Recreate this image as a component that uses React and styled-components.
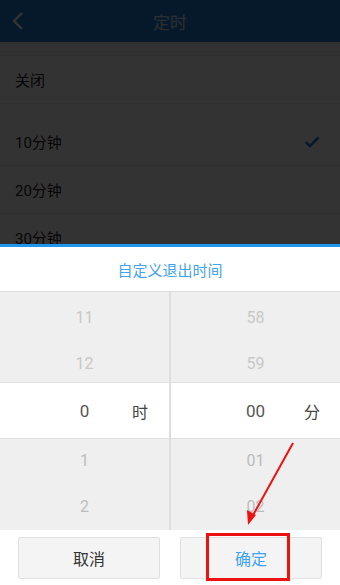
import React from "react";
import styled, { createGlobalStyle } from "styled-components";

const GlobalStyle = createGlobalStyle`
  html, body {
    margin: 0;
    padding: 0;
  }
  body {
    font-family: "Roboto", "Noto Sans CJK SC", sans-serif;
    background: #ffffff;
  }
`;

const Screen = styled.div`
  position: relative;
  width: 340px;
  height: 585px;
  overflow: hidden;
  background: #ffffff;
`;

const Header = styled.div`
  height: 42px;
  background: #197dd7;
  display: flex;
  align-items: center;
  justify-content: center;
  position: relative;
  color: #d8e6f2;
  font-size: 17px;
`;

const BackButton = styled.div`
  position: absolute;
  left: 10px;
  top: 11px;
  width: 16px;
  height: 20px;
  display: flex;
`;

const Gap = styled.div`
  height: 13px;
  background: #f2f2f2;
  border-bottom: 1px solid #e4e4e4;
`;

const List = styled.div`
  display: flex;
  flex-direction: column;
`;

const Row = styled.div`
  height: 47px;
  display: flex;
  align-items: center;
  justify-content: space-between;
  padding: 0 20px 0 15px;
  font-size: 15px;
  color: #222;
  border-bottom: 1px solid #ececec;
  margin-bottom: ${(p) => (p.$spaced ? "14px" : "0")};
`;

const Dim = styled.div`
  position: absolute;
  inset: 0;
  background: rgba(0, 0, 0, 0.8);
`;

const Sheet = styled.div`
  position: absolute;
  left: 0;
  right: 0;
  bottom: 0;
  height: 338px;
  background: #ffffff;
  border-top: 3px solid #2196ef;
  display: flex;
  flex-direction: column;
`;

const SheetTitle = styled.div`
  height: 44px;
  display: flex;
  align-items: center;
  justify-content: center;
  color: #3fa3ef;
  font-size: 15px;
  border-bottom: 1px solid #dedede;
`;

const Picker = styled.div`
  display: grid;
  grid-template-columns: 169px 2px 1fr;
  height: 238px;
`;

const Divider = styled.div`
  background: #dedede;
`;

const Column = styled.div`
  display: flex;
  flex-direction: column;
`;

const Band = styled.div`
  background: #efefef;
  height: ${(p) => p.$h}px;
  display: flex;
  flex-direction: column;
  border-top: ${(p) => (p.$top ? "1px solid #e0e0e0" : "none")};
  border-bottom: ${(p) => (p.$bottom ? "1px solid #e0e0e0" : "none")};
  box-sizing: border-box;
  overflow: hidden;
`;

const Cells = styled.div`
  display: flex;
  flex-direction: column;
  margin-top: ${(p) => p.$shift}px;
`;

const Cell = styled.div`
  height: 46px;
  flex-shrink: 0;
  display: flex;
  align-items: center;
  justify-content: center;
  font-size: 16px;
  color: ${(p) => p.$color || "#c8c8c8"};
`;

const Selected = styled.div`
  height: 55px;
  display: grid;
  grid-template-columns: 1fr ${(p) => p.$unitW}px;
  align-items: center;
  position: relative;
`;

const Value = styled.span`
  position: absolute;
  left: 0;
  right: 0;
  text-align: center;
  font-size: 17px;
  color: #555;
`;

const Unit = styled.span`
  grid-column: 2;
  font-size: 16px;
  color: #444;
`;

const Buttons = styled.div`
  flex: 1;
  display: grid;
  grid-template-columns: 142px 142px;
  justify-content: space-between;
  padding: 7px 18px 6px 18px;
  box-sizing: border-box;
`;

const Button = styled.div`
  display: flex;
  align-items: center;
  justify-content: center;
  background: #f4f4f4;
  border: 1px solid #e0e0e0;
  border-radius: 2px;
  font-size: 16px;
  color: ${(p) => (p.$primary ? "#3fa3ef" : "#333")};
`;

const Highlight = styled.div`
  position: absolute;
  left: 206px;
  top: 533px;
  width: 84px;
  height: 48px;
  border: 3px solid #ee1111;
  box-sizing: border-box;
`;

const Arrow = styled.svg`
  position: absolute;
  left: 0;
  top: 0;
  pointer-events: none;
`;

const hours = { above: ["11", "12"], value: "0", below: ["1", "2"] };
const minutes = { above: ["58", "59"], value: "00", below: ["01", "02"] };

function Wheel({ data, unit, unitW }) {
  return (
    <Column>
      <Band $h={91} $bottom>
        <Cells $shift={2}>
          {data.above.map((v) => (
            <Cell key={v}>{v}</Cell>
          ))}
        </Cells>
      </Band>
      <Selected $unitW={unitW}>
        <Value>{data.value}</Value>
        <Unit>{unit}</Unit>
      </Selected>
      <Band $h={92} $top>
        <Cells $shift={-2}>
          {data.below.map((v) => (
            <Cell key={v} $color="#bdbdbd">
              {v}
            </Cell>
          ))}
        </Cells>
      </Band>
    </Column>
  );
}

export default function App() {
  return (
    <>
      <GlobalStyle />
      <Screen>
        <Header>
          <BackButton>
            <svg width="16" height="20" viewBox="0 0 16 20">
              <path d="M12 2 L4 10 L12 18" fill="none" stroke="#ffffff" strokeWidth="2.4" />
            </svg>
          </BackButton>
          定时
        </Header>
        <Gap />
        <List>
          <Row $spaced>关闭</Row>
          <Row>
            10分钟
            <svg width="16" height="12" viewBox="0 0 16 12">
              <path d="M1.5 6 L6 10 L14.5 1.5" fill="none" stroke="#197dd7" strokeWidth="2.6" />
            </svg>
          </Row>
          <Row>20分钟</Row>
          <Row>30分钟</Row>
          <Row>60分钟</Row>
        </List>
        <Dim />
        <Sheet>
          <SheetTitle>自定义退出时间</SheetTitle>
          <Picker>
            <Wheel data={hours} unit="时" unitW={37} />
            <Divider />
            <Wheel data={minutes} unit="分" unitW={36} />
          </Picker>
          <Buttons>
            <Button>取消</Button>
            <Button $primary>确定</Button>
          </Buttons>
        </Sheet>
        <Highlight />
        <Arrow width="340" height="585" viewBox="0 0 340 585">
          <line x1="293" y1="443" x2="252" y2="517" stroke="#ee1111" strokeWidth="2" />
          <path d="M248 525 L247 510 L256 515 Z" fill="#ee1111" />
        </Arrow>
      </Screen>
    </>
  );
}
